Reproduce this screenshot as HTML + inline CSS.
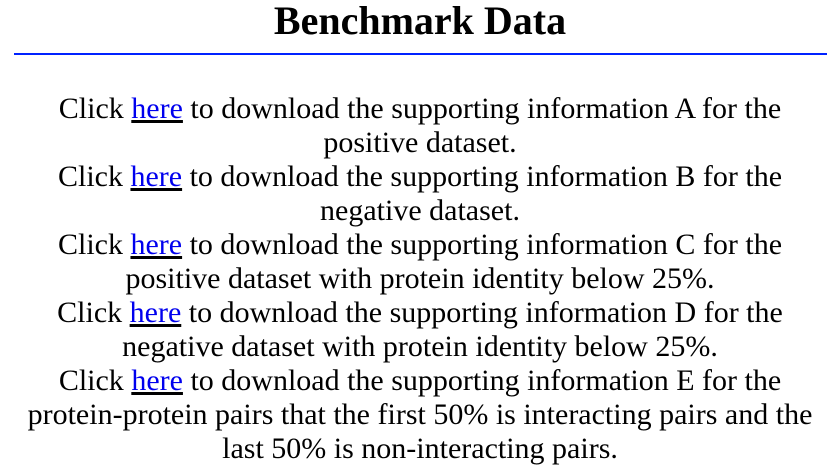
<!DOCTYPE html>
<html><head><meta charset="utf-8"><style>
html,body{margin:0;padding:0;background:#fff;}
body{width:836px;height:474px;overflow:hidden;font-family:"Liberation Serif",serif;color:#000;}
h1{margin:0;position:absolute;top:0;left:2px;width:836px;text-align:center;font-size:40px;line-height:42px;font-weight:bold;}
.rule{position:absolute;top:53px;left:14px;width:813px;height:2px;background:#0022ff;}
.body{position:absolute;top:92px;left:2px;width:836px;text-align:center;font-size:30px;line-height:34px;}
a{color:#0000ee;text-decoration:underline;text-decoration-color:#000;}
</style></head><body>
<h1>Benchmark Data</h1>
<div class="rule"></div>
<div class="body">
Click <a>here</a> to download the supporting information A for the<br>positive dataset.<br>
Click <a>here</a> to download the supporting information B for the<br>negative dataset.<br>
Click <a>here</a> to download the supporting information C for the<br>positive dataset with protein identity below 25%.<br>
Click <a>here</a> to download the supporting information D for the<br>negative dataset with protein identity below 25%.<br>
Click <a>here</a> to download the supporting information E for the<br>protein-protein pairs that the first 50% is interacting pairs and the<br>last 50% is non-interacting pairs.
</div>
</body></html>
